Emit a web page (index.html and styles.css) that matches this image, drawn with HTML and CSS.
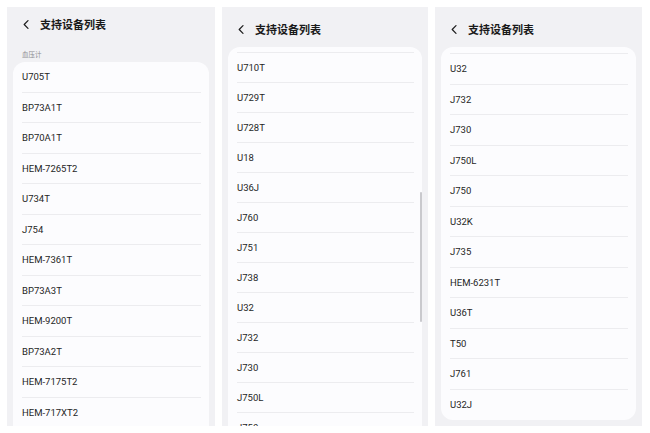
FILE: index.html
```html
<!DOCTYPE html>
<html lang="zh">
<head>
<meta charset="utf-8">
<title>支持设备列表</title>
<link rel="stylesheet" href="styles.css">
</head>
<body>
<div class="screens">
  <section class="panel panel--a">
    <header class="header">
      <svg class="back" width="6" height="9" viewBox="0 0 6 9"><path d="M5 0.7 L1.2 4.5 L5 8.3" fill="none" stroke="#1c1c1c" stroke-width="1.2" stroke-linecap="round" stroke-linejoin="round"/></svg>
      <h1 class="title">支持设备列表</h1>
    </header>
    <div class="label">血压计</div>
    <div class="card">
      <div class="row">U705T</div>
      <div class="row">BP73A1T</div>
      <div class="row">BP70A1T</div>
      <div class="row">HEM-7265T2</div>
      <div class="row">U734T</div>
      <div class="row">J754</div>
      <div class="row">HEM-7361T</div>
      <div class="row">BP73A3T</div>
      <div class="row">HEM-9200T</div>
      <div class="row">BP73A2T</div>
      <div class="row">HEM-7175T2</div>
      <div class="row">HEM-717XT2</div>
    </div>
  </section>

  <section class="panel panel--b">
    <header class="header header--low">
      <svg class="back" width="6" height="9" viewBox="0 0 6 9"><path d="M5 0.7 L1.2 4.5 L5 8.3" fill="none" stroke="#1c1c1c" stroke-width="1.2" stroke-linecap="round" stroke-linejoin="round"/></svg>
      <h1 class="title">支持设备列表</h1>
    </header>
    <div class="card card--scroll">
      <div class="row row--partial row--b-partial"></div>
      <div class="row row--b">U710T</div>
      <div class="row row--b">U729T</div>
      <div class="row row--b">U728T</div>
      <div class="row row--b">U18</div>
      <div class="row row--b">U36J</div>
      <div class="row row--b">J760</div>
      <div class="row row--b">J751</div>
      <div class="row row--b">J738</div>
      <div class="row row--b">U32</div>
      <div class="row row--b">J732</div>
      <div class="row row--b">J730</div>
      <div class="row row--b">J750L</div>
      <div class="row row--b">J750</div>
      <div class="scrollbar"></div>
    </div>
  </section>

  <section class="panel panel--c">
    <header class="header header--low">
      <svg class="back" width="6" height="9" viewBox="0 0 6 9"><path d="M5 0.7 L1.2 4.5 L5 8.3" fill="none" stroke="#1c1c1c" stroke-width="1.2" stroke-linecap="round" stroke-linejoin="round"/></svg>
      <h1 class="title">支持设备列表</h1>
    </header>
    <div class="card card--end">
      <div class="row row--partial row--c-partial"></div>
      <div class="row">U32</div>
      <div class="row">J732</div>
      <div class="row">J730</div>
      <div class="row">J750L</div>
      <div class="row">J750</div>
      <div class="row">U32K</div>
      <div class="row">J735</div>
      <div class="row">HEM-6231T</div>
      <div class="row">U36T</div>
      <div class="row">T50</div>
      <div class="row">J761</div>
      <div class="row row--last">U32J</div>
    </div>
  </section>
</div>
</body>
</html>
```

FILE: styles.css
```css
* { box-sizing: border-box; }

html, body {
  margin: 0;
  padding: 0;
  background: #ffffff;
}

body {
  width: 650px;
  height: 433px;
  overflow: hidden;
  font-family: Roboto, "Noto Sans CJK SC", sans-serif;
  color: #1f1f1f;
}

.screens {
  display: flex;
  gap: 7px;
  padding: 7px 0 0 7px;
}

.panel {
  height: 419px;
  background: #f1f1f4;
  overflow: hidden;
  display: flex;
  flex-direction: column;
  flex: none;
}

.panel--a { width: 208px; }
.panel--b { width: 206px; }
.panel--c { width: 207px; }

.header {
  display: flex;
  align-items: center;
  gap: 11px;
  height: 34px;
  padding-left: 16px;
  flex: none;
}

.header--low {
  height: 40px;
  padding-top: 4px;
}

.back { display: block; flex: none; }

.title {
  margin: 0;
  font-family: "Noto Sans CJK SC", sans-serif;
  font-size: 11px;
  font-weight: 700;
  line-height: 14px;
  color: #1a1a1a;
}

.label {
  padding: 9px 0 0 15px;
  height: 21px;
  font-family: "Noto Sans CJK SC", sans-serif;
  font-size: 6.5px;
  line-height: 8px;
  color: #8c8c90;
  flex: none;
}

.card {
  position: relative;
  margin: 0 6px;
  background: #fcfcfe;
  border-radius: 12px 12px 0 0;
  flex: none;
}

.card--end {
  border-radius: 12px;
}

.row {
  height: 30.5px;
  margin: 0 8px 0 9px;
  display: flex;
  align-items: center;
  font-size: 9.5px;
  line-height: 12px;
  border-bottom: 1px solid #ececef;
  padding-top: 1px;
}

.row--b { height: 30px; }

.row--partial { padding: 0; }
.row--b-partial { height: 6px; }
.row--c-partial { height: 7px; }

.row--last { border-bottom: none; }

.scrollbar {
  position: absolute;
  right: 0;
  top: 145px;
  width: 2px;
  height: 130px;
  border-radius: 1px;
  background: #c9c9cd;
}
```
